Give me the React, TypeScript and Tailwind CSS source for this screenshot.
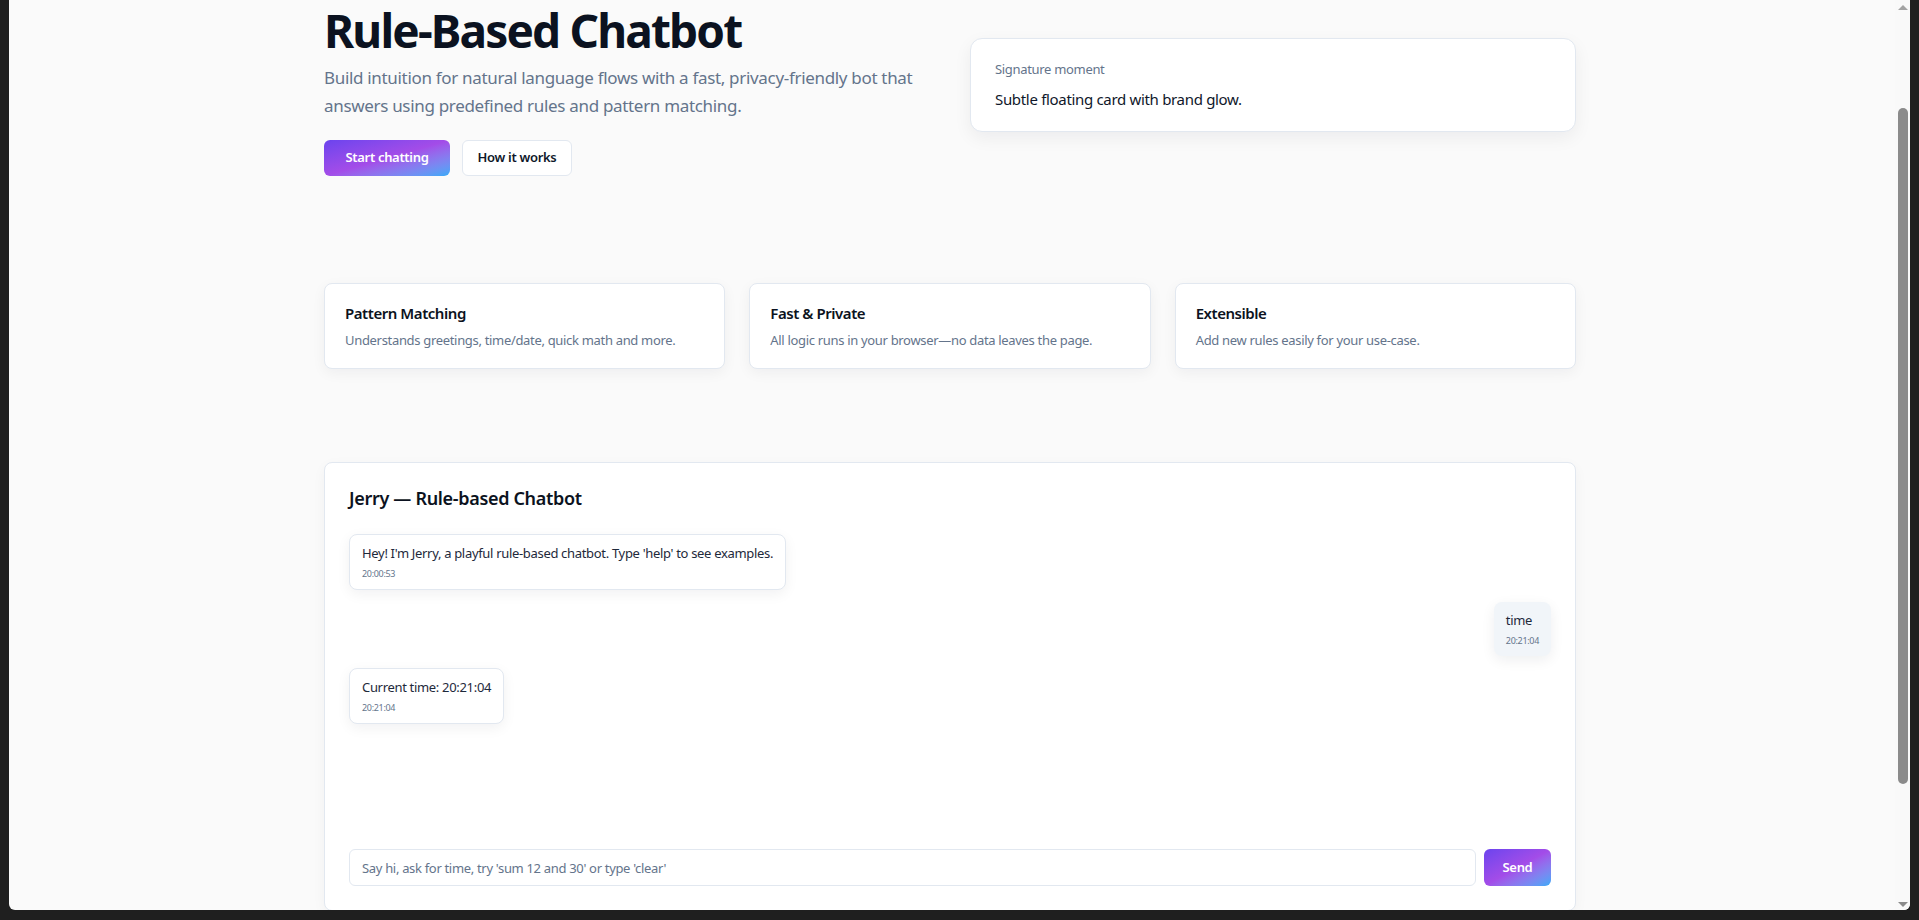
import React from 'react';

type Message = { id: number; from: 'bot' | 'user'; text: string; time: string };

const FEATURES = [
  { title: 'Pattern Matching', text: 'Understands greetings, time/date, quick math and more.' },
  { title: 'Fast & Private', text: 'All logic runs in your browser—no data leaves the page.' },
  { title: 'Extensible', text: 'Add new rules easily for your use-case.' },
];

const MESSAGES: Message[] = [
  { id: 1, from: 'bot', text: "Hey! I'm Jerry, a playful rule-based chatbot. Type 'help' to see examples.", time: '20:00:53' },
  { id: 2, from: 'user', text: 'time', time: '20:21:04' },
  { id: 3, from: 'bot', text: 'Current time: 20:21:04', time: '20:21:04' },
];

const gradient = 'bg-gradient-to-br from-[#6b43ee] via-[#a34ce8] to-[#2eaaf8]';

const Scrollbar: React.FC = () => (
  <div className="w-[15px] shrink-0 bg-[#f9f9f9] flex flex-col items-center">
    <div className="mt-[5px] w-0 h-0 border-l-[5px] border-r-[5px] border-b-[5px] border-l-transparent border-r-transparent border-b-[#a3a3a3]" />
    <div className="mt-[98px] h-[676px] w-[10px] rounded-full bg-[#8b8b8b]" />
    <div className="mt-auto mb-[3px] w-0 h-0 border-l-[5px] border-r-[5px] border-t-[5px] border-l-transparent border-r-transparent border-t-[#8b8b8b]" />
  </div>
);

const Bubble: React.FC<{ msg: Message }> = ({ msg }) => {
  const isUser = msg.from === 'user';
  return (
    <div className={isUser ? 'flex justify-end' : 'flex justify-start'}>
      <div
        className={
          isUser
            ? 'rounded-lg bg-[#f1f5f9] px-3 py-2 shadow-[0_4px_14px_rgba(15,23,42,0.07)]'
            : 'rounded-lg border border-[#e2e8f0] bg-white px-3 py-[8px] shadow-[0_4px_14px_rgba(15,23,42,0.06)]'
        }
      >
        <p className="text-[13px] leading-5 text-[#1e293b]">{msg.text}</p>
        <p className="mt-[4px] text-[9px] leading-[14px] text-[#64748b]">{msg.time}</p>
      </div>
    </div>
  );
};

export default function App() {
  return (
    <div className="h-[920px] w-full overflow-hidden bg-[#1f1f1f] pl-[9px] pr-[9px] pb-[10px] flex font-['Noto_Sans',sans-serif] tracking-[-0.02em]">
      <div className="flex flex-1 overflow-hidden rounded-b-[6px] bg-[#fafafa]">
        <main className="flex-1 overflow-hidden pr-[4px]">
          <div className="mx-auto w-[1252px]">
            {/* Hero */}
            <section className="grid grid-cols-2 gap-10 items-start">
              <div>
                <h1 className="text-[46px] font-bold tracking-[-0.04em] leading-[60px] text-[#0b1220]">
                  Rule-Based Chatbot
                </h1>
                <p className="mt-1 text-[17px] leading-7 text-[#64748b]">
                  Build intuition for natural language flows with a fast, privacy-friendly bot that answers using
                  predefined rules and pattern matching.
                </p>
                <div className="mt-5 flex gap-3">
                  <button className={`h-9 w-[126px] rounded-md text-[13px] font-semibold text-white ${gradient}`}>
                    Start chatting
                  </button>
                  <button className="h-9 w-[110px] rounded-md border border-[#e2e8f0] bg-white text-[13px] font-semibold text-[#0f172a]">
                    How it works
                  </button>
                </div>
              </div>
              <div className="mt-[38px] rounded-xl border border-[#e2e8f0] bg-white px-6 py-5 shadow-[0_6px_18px_rgba(15,23,42,0.06)]">
                <p className="text-[13px] leading-5 text-[#64748b]">Signature moment</p>
                <p className="mt-2 text-[15px] leading-6 text-[#0f172a]">Subtle floating card with brand glow.</p>
              </div>
            </section>

            {/* Features */}
            <section className="mt-[107px] grid grid-cols-3 gap-6">
              {FEATURES.map((f) => (
                <div
                  key={f.title}
                  className="rounded-lg border border-[#e2e8f0] bg-white px-5 py-[18px] shadow-[0_4px_14px_rgba(15,23,42,0.05)]"
                >
                  <h3 className="text-[15px] font-semibold tracking-[-0.03em] leading-[22px] text-[#0b1220]">{f.title}</h3>
                  <p className="mt-[6px] text-[13px] leading-5 text-[#64748b]">{f.text}</p>
                </div>
              ))}
            </section>

            {/* Chat */}
            <section className="mt-[93px] rounded-lg border border-[#e2e8f0] bg-white px-6 pt-[21px] pb-6 shadow-[0_4px_14px_rgba(15,23,42,0.04)]">
              <h2 className="text-lg font-semibold leading-7 text-[#0b1220]">Jerry — Rule-based Chatbot</h2>
              <div className="mt-[22px] h-[303px] flex flex-col gap-3">
                {MESSAGES.map((m) => (
                  <Bubble key={m.id} msg={m} />
                ))}
              </div>
              <div className="mt-3 flex gap-2">
                <input
                  className="h-[37px] flex-1 rounded-md border border-[#e2e8f0] bg-white px-3 text-[13px] text-[#0f172a] placeholder:text-[#64748b] outline-none"
                  placeholder="Say hi, ask for time, try 'sum 12 and 30' or type 'clear'"
                />
                <button className={`h-[37px] w-[67px] rounded-md text-[13px] font-semibold text-white ${gradient}`}>
                  Send
                </button>
              </div>
            </section>
          </div>
        </main>
        <Scrollbar />
      </div>
    </div>
  );
}
